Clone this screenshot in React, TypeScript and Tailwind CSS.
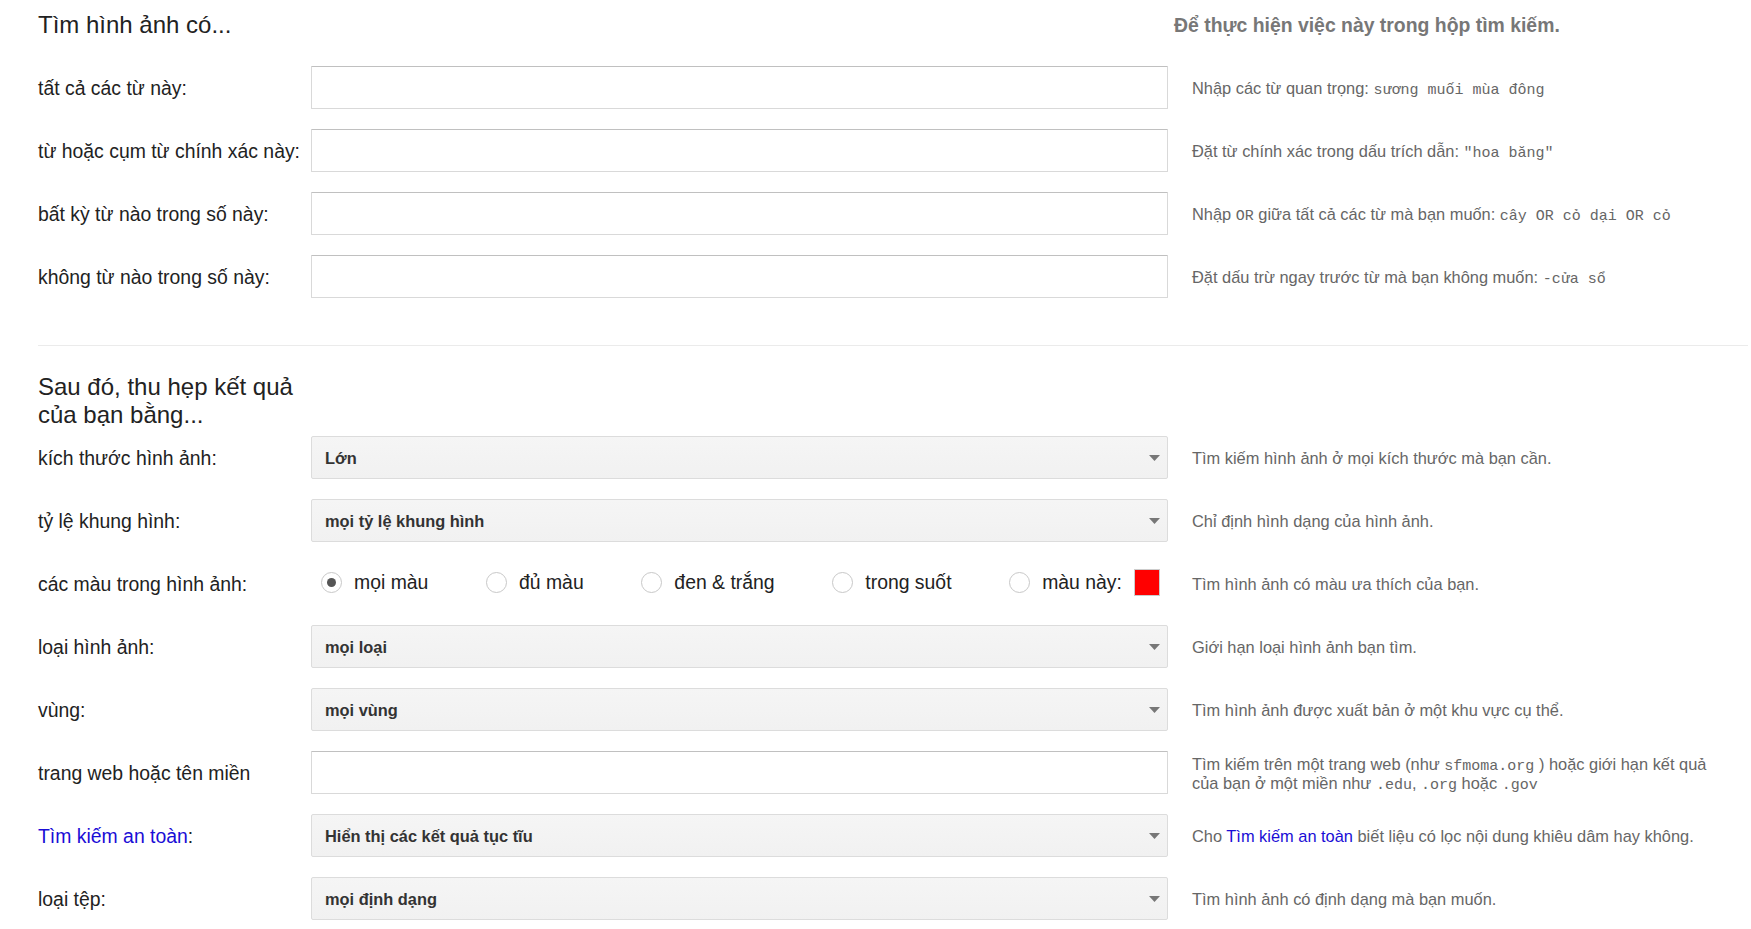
const mono = "font-['Liberation_Mono',monospace] text-[15px] leading-none text-[#666]";

function TextBox() {
  return (
    <div className="h-[43px] w-full rounded-[1px] border border-[#d9d9d9] border-t-[#c0c0c0] bg-white" />
  );
}

function Select({ value }: { value: string }) {
  return (
    <div className="flex h-[43px] w-full items-center justify-between rounded-[2px] border border-[#dcdcdc] bg-gradient-to-b from-[#f5f5f5] to-[#f1f1f1] pl-[13px] pr-[7px]">
      <span className="pt-[1px] text-[16.4px] font-bold text-[#333]">{value}</span>
      <svg width="11" height="6" viewBox="0 0 11 6">
        <polygon points="0,0 11,0 5.5,6" fill="#777" />
      </svg>
    </div>
  );
}

function Row({
  label,
  children,
  hint,
  link,
}: {
  label: string;
  children: React.ReactNode;
  hint: React.ReactNode;
  link?: boolean;
}) {
  return (
    <div className="grid h-[63px] grid-cols-[273px_857px_1fr] items-center">
      <div className={"pt-[3px] text-[19.4px] " + (link ? "text-[#1a0dd6]" : "text-[#222]")}>
        {link ? (
          <>
            <span>Tìm kiếm an toàn</span>
            <span className="text-[#222]">:</span>
          </>
        ) : (
          label
        )}
      </div>
      {children}
      <div className="pl-[24px] pr-[36px] pt-[2px] text-[16.4px] leading-[19px] text-[#666]">{hint}</div>
    </div>
  );
}

function Radio({ label, checked }: { label: string; checked?: boolean }) {
  return (
    <label className="flex items-center gap-[12px]">
      <span className="flex h-[21px] w-[21px] items-center justify-center rounded-full border border-[#c8c8c8] bg-white">
        {checked && <span className="h-[9px] w-[9px] rounded-full bg-[#555]" />}
      </span>
      <span className="text-[19.4px] text-[#222]">{label}</span>
    </label>
  );
}

export default function App() {
  return (
    <div className="min-h-screen bg-white pl-[38px] pr-[3px] font-['Liberation_Sans',Arial,sans-serif] text-[#222]">
      {/* phần 1 */}
      <div className="grid h-[56px] grid-cols-[273px_857px_1fr] pt-[11px]">
        <h1 className="whitespace-nowrap text-[24px] leading-[28px]">Tìm hình ảnh có...</h1>
        <div />
        <div className="whitespace-nowrap pl-[6px] text-[19.4px] font-bold leading-[28px] text-[#777]">
          Để thực hiện việc này trong hộp tìm kiếm.
        </div>
      </div>

      <Row
        label="tất cả các từ này:"
        hint={
          <>
            Nhập các từ quan trọng: <span className={mono}>sương muối mùa đông</span>
          </>
        }
      >
        <TextBox />
      </Row>
      <Row
        label="từ hoặc cụm từ chính xác này:"
        hint={
          <>
            Đặt từ chính xác trong dấu trích dẫn: <span className={mono}>"hoa băng"</span>
          </>
        }
      >
        <TextBox />
      </Row>
      <Row
        label="bất kỳ từ nào trong số này:"
        hint={
          <>
            Nhập <span className={mono}>OR</span> giữa tất cả các từ mà bạn muốn:{" "}
            <span className={mono}>cây OR cỏ dại OR cỏ</span>
          </>
        }
      >
        <TextBox />
      </Row>
      <Row
        label="không từ nào trong số này:"
        hint={
          <>
            Đặt dấu trừ ngay trước từ mà bạn không muốn: <span className={mono}>-cửa sổ</span>
          </>
        }
      >
        <TextBox />
      </Row>

      <div className="mt-[37px] border-t border-[#ebebeb]" />

      {/* phần 2 */}
      <h2 className="-mb-[3px] w-[273px] pt-[27px] text-[24px] leading-[28px]">
        Sau đó, thu hẹp kết quả của bạn bằng...
      </h2>

      <Row label="kích thước hình ảnh:" hint="Tìm kiếm hình ảnh ở mọi kích thước mà bạn cần.">
        <Select value="Lớn" />
      </Row>
      <Row label="tỷ lệ khung hình:" hint="Chỉ định hình dạng của hình ảnh.">
        <Select value="mọi tỷ lệ khung hình" />
      </Row>
      <Row label="các màu trong hình ảnh:" hint="Tìm hình ảnh có màu ưa thích của bạn.">
        <div className="-mt-[2px] flex items-center justify-between pl-[10px] pr-[8px]">
          <Radio label="mọi màu" checked />
          <Radio label="đủ màu" />
          <Radio label="đen & trắng" />
          <Radio label="trong suốt" />
          <div className="flex items-center gap-[12px]">
            <Radio label="màu này:" />
            <span className="h-[27px] w-[26px] border border-[#ccc] bg-[#ff0000]" />
          </div>
        </div>
      </Row>
      <Row label="loại hình ảnh:" hint="Giới hạn loại hình ảnh bạn tìm.">
        <Select value="mọi loại" />
      </Row>
      <Row label="vùng:" hint="Tìm hình ảnh được xuất bản ở một khu vực cụ thể.">
        <Select value="mọi vùng" />
      </Row>
      <Row
        label="trang web hoặc tên miền"
        hint={
          <>
            Tìm kiếm trên một trang web (như <span className={mono}>sfmoma.org</span> ) hoặc giới hạn kết quả
            của bạn ở một miền như <span className={mono}>.edu</span>, <span className={mono}>.org</span> hoặc{" "}
            <span className={mono}>.gov</span>
          </>
        }
      >
        <TextBox />
      </Row>
      <Row
        label="Tìm kiếm an toàn:"
        link
        hint={
          <>
            Cho <span className="text-[#1a0dd6]">Tìm kiếm an toàn</span> biết liệu có lọc nội dung khiêu dâm hay
            không.
          </>
        }
      >
        <Select value="Hiển thị các kết quả tục tĩu" />
      </Row>
      <Row label="loại tệp:" hint="Tìm hình ảnh có định dạng mà bạn muốn.">
        <Select value="mọi định dạng" />
      </Row>
    </div>
  );
}
